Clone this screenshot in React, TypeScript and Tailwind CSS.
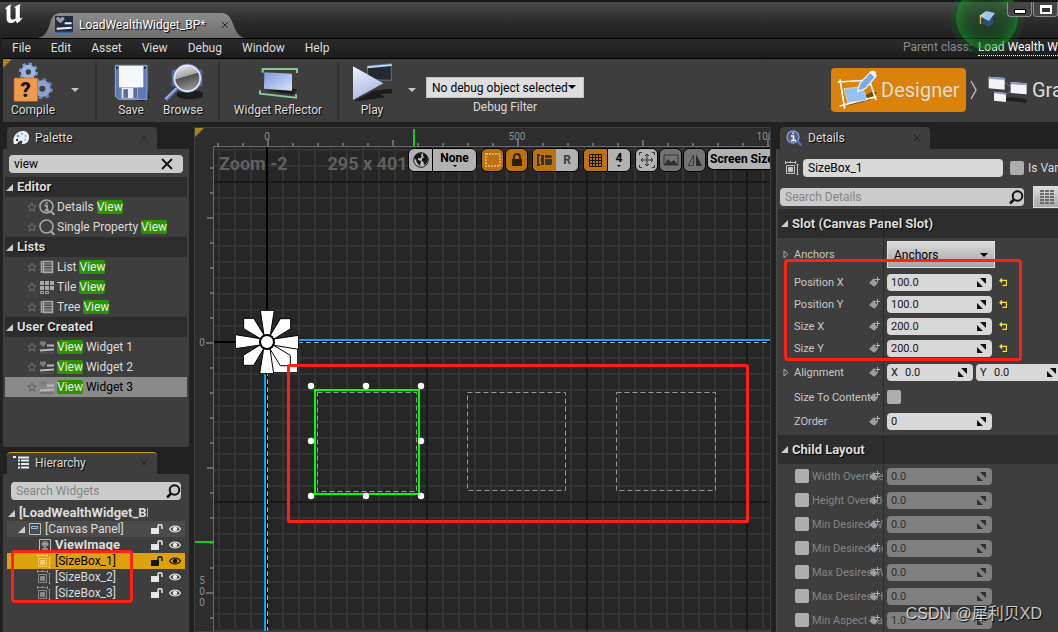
import type React from "react"

type PaletteItem = {
  before?: string
  after?: string
  icon: React.ReactNode
  selected?: boolean
}

type PaletteGroup = {
  title: string
  items: PaletteItem[]
}

type Property = {
  label: string
  value: string
}

const ListIcon = () => (
  <svg viewBox="0 0 16 16" className="h-4 w-4" fill="none" stroke="#a8a8a8">
    <path d="M2.5 2v12M4.5 2.5h9v11h-9z" strokeWidth="1.6" />
    <path d="M5 5h8M5 7.5h8M5 10h8M5 12h8" strokeWidth="1" />
  </svg>
)

const TileIcon = () => (
  <svg viewBox="0 0 16 16" className="h-4 w-4" fill="#a8a8a8">
    <path d="M1 2h4v4H1zM6 2h4v4H6zM11 2h4v4h-4zM1 7h4v4H1zM6 7h4v4H6zM11 7h4v4h-4z" />
    <path d="M1.500 12.500h3v2h-3zM6.500 12.500h3v2h-3z" fill="none" stroke="#a8a8a8" />
  </svg>
)

const LensIcon = ({ info }: { info?: boolean }) => (
  <svg viewBox="0 0 16 16" className="h-4 w-4" fill="none" stroke="#a8a8a8">
    <circle cx="7.500" cy="7.500" r="6.500" strokeWidth="1.600" />
    <path d="M12 12.500 15.500 16" strokeWidth="2" />
    {info && <path d="M5.500 6.500h2.500v5M5.500 11.500h4.500M6.500 3.800h2" strokeWidth="1.800" />}
  </svg>
)

const WidgetIcon = () => (
  <svg viewBox="0 0 16 16" className="h-4 w-4">
    <path d="M4 8 1 5V3l1.500-1L4 3l1.500-1L7 3v2z" fill="#7c7c7c" />
    <path d="M8 6.500h7M1 11.500 15 10.500" stroke="#b8b8b8" strokeWidth="2" />
    <path d="M1 14h14" stroke="#5f5f5f" strokeWidth="1" />
  </svg>
)

const groups: PaletteGroup[] = [
  {
    title: "Editor",
    items: [
      { before: "Details ", icon: <LensIcon info /> },
      { before: "Single Property ", icon: <LensIcon /> },
    ],
  },
  {
    title: "Lists",
    items: [
      { before: "List ", icon: <ListIcon /> },
      { before: "Tile ", icon: <TileIcon /> },
      { before: "Tree ", icon: <ListIcon /> },
    ],
  },
  {
    title: "User Created",
    items: [
      { after: " Widget 1", icon: <WidgetIcon /> },
      { after: " Widget 2", icon: <WidgetIcon /> },
      { after: " Widget 3", icon: <WidgetIcon />, selected: true },
    ],
  },
]

const menus = ["File", "Edit", "Asset", "View", "Debug", "Window", "Help"]

const slotProperties: Property[] = [
  { label: "Position X", value: "100.0" },
  { label: "Position Y", value: "100.0" },
  { label: "Size X", value: "200.0" },
  { label: "Size Y", value: "200.0" },
]

const childProperties: Property[] = [
  { label: "Width Override", value: "0.0" },
  { label: "Height Override", value: "0.0" },
  { label: "Min Desired Width", value: "0.0" },
  { label: "Min Desired Height", value: "0.0" },
  { label: "Max Desired Width", value: "0.0" },
  { label: "Max Desired Height", value: "0.0" },
  { label: "Min Aspect Ratio", value: "1.0" },
]

export default function App() {
  return (
    <div className="relative flex h-screen flex-col overflow-hidden bg-[#1f1f1f] font-['Roboto',sans-serif] text-xs text-[#dcdcdc]">
      <TitleBar />
      <MenuBar />
      <Toolbar />
      <div className="flex min-h-0 flex-1 gap-[5px] bg-[#212121] pt-[5px] pl-[3px]">
        <aside className="flex w-[186px] shrink-0 flex-col gap-[5px]">
          <Palette />
          <Hierarchy />
        </aside>
        <Designer />
        <Details />
      </div>
      <p className="pointer-events-none absolute right-4 bottom-1 font-['Liberation_Sans','Noto_Sans_CJK_SC',sans-serif] text-base leading-7 whitespace-nowrap text-white/75 [text-shadow:1px_1px_1px_#000]">
        CSDN @犀利贝XD
      </p>
    </div>
  )
}

function TitleBar() {
  return (
    <header className="relative flex h-[38px] shrink-0 items-end border-t-2 border-[#161616] bg-gradient-to-b from-[#4b4b4b] via-[#2d2d2d] to-[#202020]">
      <svg viewBox="0 0 60 62" className="mb-3 ml-1 h-5 w-5 shrink-0 self-center" fill="#fff">
        <path d="M1 14C8 9 14 3 22 1c-3 4-3 7-3 12v27c0 5 3 8 7 8 4 0 7-2 9-4V15c0-4-2-5-5-4C35 7 42 3 51 1c-3 5-3 8-3 13v26c0 4 2 5 5 4l5-2c-5 7-11 13-18 18-2-3-4-5-4-9-4 4-8 8-15 8C11 59 7 53 7 45V21c0-5-1-8-6-7z" />
      </svg>
      <div className="relative ml-[14px] h-[25px] w-[206px]">
        <svg viewBox="0 0 210 25" preserveAspectRatio="none" className="absolute inset-0 h-full w-full">
          <defs>
            <linearGradient id="tab" x2="0" y2="1">
              <stop stopColor="#8c8c8c" />
              <stop offset="1" stopColor="#6d6d6d" />
            </linearGradient>
          </defs>
          <path d="M0 25C8 23 10 18 13 8 15 2 18 0 24 0H186c6 0 9 2 12 9 4 10 6 14 12 16z" fill="url(#tab)" />
        </svg>
        <div className="relative flex h-full items-center gap-1.5 pr-4 pb-0.5 pl-[17px]">
          <svg viewBox="0 0 54 51" className="h-[17px] w-[18px] shrink-0">
            <path d="M0 0h54v51H0z" fill="#202c42" />
            <path d="M0 47h54v4H0z" fill="#3864a6" />
            <path d="M16 22 4 11V5l5-3 7 4 7-4 5 3v6z" fill="#9b9b9b" />
            <path d="M29 22h21M5 38l45-3" stroke="#eee" strokeWidth="6" />
          </svg>
          <span className="text-white [text-shadow:1px_1px_1px_#000]">LoadWealthWidget_BP*</span>
          <button aria-label="Close tab" className="ml-auto">
            <CloseMark />
          </button>
        </div>
      </div>
      <svg viewBox="0 0 80 80" className="pointer-events-none absolute -top-6 right-[31px] z-10 h-20 w-20">
        <defs>
          <radialGradient id="glow">
            <stop stopColor="#0c6f16" stopOpacity="0.05" />
            <stop offset="0.6" stopColor="#118a20" stopOpacity="0.2" />
            <stop offset="1" stopColor="#14a528" stopOpacity="0.5" />
          </radialGradient>
        </defs>
        <circle cx="40" cy="40" r="37" fill="#0d7a1a" opacity="0.18" />
        <circle cx="40" cy="40" r="31" fill="url(#glow)" />
        <path d="M36 41v5l6 3 4-3v-6z" fill="#2d4f74" />
        <path d="m32 38 7-5 9 2-6 8z" fill="#9cc7f2" />
        <path d="M33.500 38v8" stroke="#d8a75f" strokeWidth="1.500" />
        <path d="m40 36.500-7 1.500" stroke="#eecb92" />
      </svg>
      <div className="z-20 ml-auto flex gap-px self-start">
        <button aria-label="Minimize" className="flex h-[15px] w-[25px] items-center justify-center rounded-b-sm border border-t-0 border-[#8c8c8c] bg-[#454545]">
          <span className="mt-1 h-[5px] w-3 border border-black bg-white" />
        </button>
        <button aria-label="Maximize" className="flex h-[15px] w-[25px] items-center justify-center rounded-b-sm border border-t-0 border-[#8c8c8c] bg-[#454545]">
          <span className="h-[9px] w-3 border-2 border-t-[3px] border-white bg-[#333]" />
        </button>
      </div>
    </header>
  )
}

function MenuBar() {
  return (
    <nav className="ml-0.5 flex h-[21px] shrink-0 items-center border-y border-black bg-gradient-to-b from-[#2b2b2b] to-[#1c1c1c] pb-0.5 pl-2.5">
      <div className="flex gap-5">
        {menus.map((menu) => (
          <button key={menu}>{menu}</button>
        ))}
      </div>
      <div className="ml-auto flex w-[155px] gap-1.5 overflow-hidden whitespace-nowrap">
        <span className="text-[#8c8c8c]">Parent class:</span>
        <a href="#parent" className="border-b border-dotted border-white leading-4 text-white">
          Load Wealth W
        </a>
      </div>
    </nav>
  )
}

function ToolButton({ label, width, children }: { label: string; width: string; children: React.ReactNode }) {
  return (
    <button className={`flex shrink-0 flex-col items-center whitespace-nowrap ${width}`}>
      {children}
      <span className="leading-4 [text-shadow:1px_1px_1px_#000]">{label}</span>
    </button>
  )
}

function DropArrow({ label }: { label: string }) {
  return (
    <button aria-label={label} className="flex h-14 w-5 shrink-0 items-center justify-center">
      <svg viewBox="0 0 8 4" className="h-1 w-2">
        <path d="M0 0h8L4 4z" fill="#c4c4c4" />
      </svg>
    </button>
  )
}

function Separator() {
  return <div className="h-[58px] w-0.5 shrink-0 bg-[#303030]" />
}

function Toolbar() {
  return (
    <div className="relative ml-[3px] flex h-[63px] shrink-0 items-start bg-[#3e3e3e] pt-[3px] pl-2">
      <svg viewBox="0 0 9 9" className="absolute top-0 left-0 h-[9px] w-[9px]">
        <path d="M0 0h9L0 9z" fill="#a78322" />
      </svg>
      <ToolButton label="Compile" width="w-11">
        <svg viewBox="42 186 120 120" className="h-10 w-10">
          <circle cx="88" cy="216" r="24" fill="none" stroke="#7e98cc" strokeWidth="9" strokeDasharray="10 8.850" />
          <circle cx="88" cy="216" r="15" fill="none" stroke="#9db5e2" strokeWidth="14" />
          <circle cx="130" cy="266" r="27" fill="none" stroke="#6c83b4" strokeWidth="9" strokeDasharray="11 10.200" />
          <circle cx="130" cy="266" r="17" fill="none" stroke="#8ba2d2" strokeWidth="16" />
          <rect x="45" y="234" width="71" height="70" rx="3" fill="#f09a4c" stroke="#b96620" strokeWidth="2" />
          <text x="80" y="291" textAnchor="middle" fontSize="60" fontWeight="900" fill="#161616">
            ?
          </text>
        </svg>
      </ToolButton>
      <div className="ml-2.5">
        <DropArrow label="Compile options" />
      </div>
      <div className="ml-2.5">
        <Separator />
      </div>
      <div className="ml-2 flex">
        <ToolButton label="Save" width="w-[52px]">
          <svg viewBox="333 186 120 120" className="h-10 w-10">
            <path d="m352 290 75 14 22-11-12-33z" fill="#1f1f1f" />
            <path d="M346 196h95v102h-85l-10-10z" fill="#6078b4" stroke="#8fa8dd" strokeWidth="3" />
            <path d="M357 198h73v64h-73z" fill="#f5f7fb" />
            <path d="M365 263h48v32h-48z" fill="#e9ebf0" />
            <path d="M370 268h14v25h-14zM400 264h12v31h-12z" fill="#5d6e98" />
            <path d="M348 200h6v6h-6zM432 200h6v6h-6z" fill="#1d2540" />
          </svg>
        </ToolButton>
        <ToolButton label="Browse" width="w-[52px]">
          <svg viewBox="489 186 120 120" className="h-10 w-10">
            <defs>
              <linearGradient id="lens" x2="0.3" y2="1">
                <stop stopColor="#f2f2f2" />
                <stop offset="0.5" stopColor="#a5a5a5" />
                <stop offset="0.52" stopColor="#505050" />
                <stop offset="1" stopColor="#909090" />
              </linearGradient>
            </defs>
            <ellipse cx="570" cy="284" rx="40" ry="14" fill="#1b1b1b" />
            <path d="M515 209h92v50h-92z" fill="#52679a" />
            <path d="m530 266-33 33" stroke="#5b79ba" strokeWidth="11" />
            <path d="m530 264-34 33" stroke="#a8bee8" strokeWidth="4" />
            <circle cx="562" cy="235" r="39" fill="url(#lens)" stroke="#dfe7f7" strokeWidth="6" />
            <circle cx="562" cy="235" r="43" fill="none" stroke="#647fba" strokeWidth="2" />
          </svg>
        </ToolButton>
      </div>
      <div className="ml-[9px]">
        <Separator />
      </div>
      <div className="ml-3">
        <ToolButton label="Widget Reflector" width="w-[92px]">
          <svg viewBox="774 186 120 120" className="h-10 w-10">
            <defs>
              <linearGradient id="panel" x2="1" y2="1">
                <stop stopColor="#7f9ad8" />
                <stop offset="1" stopColor="#d5e2fb" />
              </linearGradient>
            </defs>
            <path d="m800 272 78 12 14-16-20-2z" fill="#1d1d1d" />
            <path d="m793 217 83 4v51l-84-6z" fill="url(#panel)" />
            <path d="M788 218v-11h103v12M780 271v10l108 12v-10" fill="none" stroke="#8cc596" strokeWidth="6" />
          </svg>
        </ToolButton>
      </div>
      <div className="ml-[13px]">
        <Separator />
      </div>
      <div className="ml-[13px]">
        <ToolButton label="Play" width="w-10">
          <svg viewBox="36 186 120 120" className="h-10 w-10">
            <defs>
              <linearGradient id="play" x2="0.4" y2="1">
                <stop stopColor="#eef3ff" />
                <stop offset="1" stopColor="#a9b9df" />
              </linearGradient>
            </defs>
            <path d="m43 302 60-30 54-6v14l-38 2 16 10-84 12z" fill="#1b1b1b" />
            <path d="M82 198 154 191v50l-70-2z" fill="#24282f" stroke="#5c7390" strokeWidth="3" />
            <path d="m82 199 73-7v6l-73 7z" fill="#bddbf5" />
            <path d="m39 199 91 51-91 50z" fill="url(#play)" />
          </svg>
        </ToolButton>
      </div>
      <div className="ml-2.5">
        <DropArrow label="Play options" />
      </div>
      <div className="ml-1 flex w-[158px] shrink-0 flex-col items-center pt-[15px]">
        <div className="relative w-full">
          <select id="debug-filter" className="h-[21px] w-full appearance-none border border-[#c2c2c2] bg-[#dedede] pl-[5px] text-black">
            <option>No debug object selected</option>
          </select>
          <svg viewBox="0 0 8 4" className="pointer-events-none absolute top-2 right-2 h-1 w-2">
            <path d="M0 0h8L4 4z" />
          </svg>
        </div>
        <label htmlFor="debug-filter" className="leading-[18px]">
          Debug Filter
        </label>
      </div>
      <div className="ml-auto flex items-center pt-1.5 text-xl">
        <button className="flex h-11 w-[135px] items-center gap-1 rounded-sm bg-[#da8209] pl-1.5">
          <svg viewBox="290 208 120 120" className="h-10 w-10">
            <path d="m318 316 72-18 21-23-16-2z" fill="#794805" />
            <path d="m292 244 102-6M298 316l110-28M299 236l14 88M385 232l22 66" stroke="#fff" strokeWidth="5" fill="none" />
            <path d="m311 264 55-6 14 40-58 8z" fill="#96c1ef" stroke="#dcecff" strokeWidth="2" />
            <path d="m352 272 6-23 34-36 16 12-32 38z" fill="#79abe7" stroke="#e6f2ff" strokeWidth="4" />
            <path d="m389 216 6-5c6-3 14 3 12 10l-5 8z" fill="#fff" />
          </svg>
          Designer
        </button>
        <svg viewBox="0 0 8 20" className="mx-1 h-5 w-2" fill="none" stroke="#b8b8b8" strokeWidth="1.500">
          <path d="m1 1 5 9-5 9" />
        </svg>
        <button className="flex w-[76px] items-center gap-1 pl-1.5 whitespace-nowrap">
          <svg viewBox="744 208 120 120" className="h-10 w-10 shrink-0">
            <path d="m776 298 84 8v-10l-46-7z" fill="#1e1e1e" />
            <path d="m790 242 30 22-26 20" fill="none" stroke="#708ac0" strokeWidth="2" />
            <path d="m746 228 48 4v35l-48-4zM812 244l48 4v33l-48-4zM762 273l36 4v27l-36-4z" fill="#f1f3f8" />
            <path d="m746 228 48 4v6l-48-4zM812 244l48 4v6l-48-4zM762 273l36 4v5l-36-4z" fill="#8599c5" />
          </svg>
          Gra
        </button>
      </div>
    </div>
  )
}

function CloseMark() {
  return (
    <svg viewBox="0 0 6 6" className="h-1.5 w-1.5" stroke="#262626" strokeWidth="1">
      <path d="M0 0 6 6M6 0 0 6" />
    </svg>
  )
}

function PanelTab({ title, icon, active }: { title: string; icon: React.ReactNode; active?: boolean }) {
  return (
    <div
      className={`ml-1 flex h-[22px] w-[150px] shrink-0 items-center gap-1.5 rounded-t-sm border-t bg-[#3e3e3e] pr-2.5 pb-0.5 pl-1.5 ${
        active ? "border-[#c6a30b]" : "border-[#3e3e3e]"
      }`}
    >
      {icon}
      <span className="[text-shadow:1px_1px_1px_#000]">{title}</span>
      <button aria-label={`Close ${title}`} className="ml-auto">
        <CloseMark />
      </button>
    </div>
  )
}

function Expander() {
  return (
    <svg viewBox="0 0 7 7" className="h-[7px] w-[7px] shrink-0">
      <path d="M7 0v7H0z" fill="#cdcdcd" />
    </svg>
  )
}

function SearchGlyph() {
  return (
    <svg viewBox="0 0 15 15" className="pointer-events-none absolute top-0.5 right-0 h-[15px] w-[15px]" fill="none" stroke="#111">
      <circle cx="8.500" cy="6" r="4.800" strokeWidth="2" />
      <path d="m5 9.500-4 4" strokeWidth="2.500" />
    </svg>
  )
}

function Palette() {
  return (
    <section className="flex min-h-0 flex-[320] flex-col">
      <PanelTab
        title="Palette"
        icon={
          <svg viewBox="0 0 16 14" className="h-[14px] w-4">
            <path d="M1 13C-1 8 2 1 9 0c5-.500 7 3 7 6 0 5-3 7-6 7-2 0-2-2-3-3-2 0-2 3-4 3z" fill="#f2f5f9" />
            <circle cx="5" cy="5" r="1.500" fill="#5ba0dc" />
            <circle cx="9" cy="2.800" r="1.400" fill="#8fc5ee" />
            <circle cx="12.500" cy="5" r="1.500" fill="#a9d3f2" />
            <circle cx="12" cy="9" r="1.500" fill="#a9d3f2" />
            <circle cx="8" cy="11" r="1.500" fill="#3e3e3e" />
            <circle cx="4" cy="9" r="1.200" fill="#3e3e3e" />
          </svg>
        }
      />
      <div className="flex-1 overflow-hidden bg-[#3e3e3e] px-0.5 pt-1.5">
        <div className="relative mx-1 mb-1">
          <input aria-label="Search palette" defaultValue="view" className="block h-[18px] w-full rounded-sm bg-[#cbcbcb] px-[5px] text-black" />
          <button aria-label="Clear search" className="absolute top-[3px] right-2.5">
            <svg viewBox="0 0 12 12" className="h-3 w-3" stroke="#111" strokeWidth="1.800">
              <path d="m1 1 10 10M11 1 1 11" />
            </svg>
          </button>
        </div>
        {groups.map((group) => (
          <div key={group.title}>
            <h3 className="flex h-5 items-center gap-1 bg-[#2d2d2d] pl-px text-[13px] font-bold [text-shadow:1px_1px_1px_#000]">
              <Expander />
              {group.title}
            </h3>
            {group.items.map((item) => (
              <PaletteRow key={`${item.before}${item.after}`} item={item} />
            ))}
          </div>
        ))}
      </div>
    </section>
  )
}

function PaletteRow({ item }: { item: PaletteItem }) {
  return (
    <div className={`flex h-5 items-center pl-[22px] whitespace-pre ${item.selected ? "bg-[#8a8a8a] text-black" : ""}`}>
      <svg viewBox="0 0 10 10" className="mr-0.5 h-2.5 w-2.5 shrink-0" fill="none" stroke={item.selected ? "#606060" : "#707070"}>
        <path d="m5 1 1.200 2.800 3 .2-2.300 2 .7 3L5 7.400 2.400 9l.7-3L.8 4l3-.2z" />
      </svg>
      <span className="mr-0.5 shrink-0">{item.icon}</span>
      <span>
        {item.before}
        <mark className="rounded-xs bg-[#2a9400] text-[#eee]">View</mark>
        {item.after}
      </span>
    </div>
  )
}

function SizeBoxIcon({ color = "#8a8a8a" }: { color?: string }) {
  return (
    <svg viewBox="0 0 14 14" className="h-3.5 w-3.5 shrink-0" fill="none" stroke={color}>
      <path d="M1.500 4.500h8v8h-8z" />
      <path d="M3.500 6.500h4v4h-4z" fill={color} />
      <path d="M.5 1.500h10M.5 0v3M10.500 0v3M5.500 0v2M12.500 3.500v10M11.500 3.500h2M11.500 13.500h2" />
    </svg>
  )
}

function RowToggles({ dark }: { dark?: boolean }) {
  const color = dark ? "#141414" : "#e6e6e6"
  return (
    <span className="ml-auto flex items-center gap-1.5">
      <button aria-label="Lock">
        <svg viewBox="0 0 12 10" className="h-2.5 w-3">
          <path d="M0 4h8v6H0z" fill={color} />
          <path d="M7 5V2.500C7 0 11 0 11 2.500V5" fill="none" stroke={color} strokeWidth="1.500" />
        </svg>
      </button>
      <button aria-label="Visibility">
        <svg viewBox="0 0 12 8" className="h-2 w-3">
          <path d="M.5 4C3 0 9 0 11.500 4 9 8 3 8 .5 4z" fill="none" stroke={color} strokeWidth="1.200" />
          <circle cx="6" cy="4" r="2.300" fill={color} />
        </svg>
      </button>
    </span>
  )
}

function Hierarchy() {
  return (
    <section className="flex min-h-0 flex-[180] flex-col">
      <PanelTab
        active
        title="Hierarchy"
        icon={
          <svg viewBox="0 0 16 13" className="h-[13px] w-4">
            <path d="M0 1h3M5 1.500h11M5 4.500h2M8 4.500h8M5 8h2M8 8h8M5 11.500h2M8 11.500h8" stroke="#e2f3fa" strokeWidth="2" />
          </svg>
        }
      />
      <div className="flex-1 overflow-hidden bg-[#3e3e3e] px-1 pt-2">
        <div className="relative mx-1 mb-[5px]">
          <input aria-label="Search widgets" placeholder="Search Widgets" className="block h-[18px] w-full rounded-sm bg-[#cbcbcb] px-[5px] placeholder:text-[#858585]" />
          <SearchGlyph />
        </div>
        <div className="relative">
          <div className="flex h-4 w-[141px] items-center gap-1 overflow-hidden pl-px text-[13px] font-bold whitespace-nowrap">
            <Expander />
            [LoadWealthWidget_BP]
          </div>
          <div className="flex h-4 items-center gap-1 bg-[#4b4b4b] pr-1 pl-[11px]">
            <Expander />
            <svg viewBox="0 0 12 12" className="h-3 w-3 shrink-0" fill="none" stroke="#bdbdbd">
              <path d="M.5.500h11v11H.5z" />
              <path d="M2.500 3.500h6v2h-6z" stroke="#90b6db" />
            </svg>
            [Canvas Panel]
            <RowToggles />
          </div>
          <div className="flex h-4 items-center gap-1 pr-1 pl-8 text-[13px] font-bold">
            <svg viewBox="0 0 12 12" className="h-3 w-3 shrink-0" fill="none" stroke="#bdbdbd">
              <path d="M.5.500h11v11H.5zM6 7v3M3 10h6" />
              <path d="M3 5c0-3 6-3 6 0S3 8 3 5zM4 4l4 2M8 4 4 6" />
            </svg>
            ViewImage
            <RowToggles />
          </div>
          {["[SizeBox_1]", "[SizeBox_2]", "[SizeBox_3]"].map((name, i) => (
            <div key={name} className={`flex h-4 items-center gap-1 pr-1 pl-[30px] ${i === 0 ? "bg-[#dca20c] text-black" : ""}`}>
              <SizeBoxIcon color={i === 0 ? "#f4ca62" : "#8a8a8a"} />
              {name}
              <RowToggles dark={i === 0} />
            </div>
          ))}
          <div className="pointer-events-none absolute top-[45px] left-1 h-[53px] w-[122px] rounded-sm border-[3px] border-[#ff2113]" />
        </div>
      </div>
    </section>
  )
}

const rulerTicks = Array.from({ length: 60 }, (_, i) => i - 8)
const handles = [
  [311, 386],
  [366, 386],
  [421, 386],
  [311, 441],
  [421, 441],
  [311, 496],
  [366, 496],
  [421, 496],
]

function Designer() {
  return (
    <main className="relative min-w-0 flex-1 overflow-hidden border border-[#3e3e3e] bg-[#262626]">
      <svg className="absolute inset-0 h-full w-full">
        <defs>
          <pattern id="minor" width="16" height="16" patternUnits="userSpaceOnUse" x="218" y="149">
            <path d="M1 0v16M0 1h16" stroke="#343434" strokeWidth="2" />
          </pattern>
          <pattern id="major" width="160" height="160" patternUnits="userSpaceOnUse" x="266" y="181">
            <path d="M1 0v160M0 1h160" stroke="#191919" strokeWidth="2" />
          </pattern>
        </defs>
        <g transform="translate(-195 -128)">
          <rect x="214" y="147" width="2000" height="1500" fill="url(#minor)" />
          <rect x="214" y="147" width="2000" height="1500" fill="url(#major)" />
          <path d="M267 147v1500M214 342h2000" stroke="#000" strokeWidth="2" />

          {/* canvas outline */}
          <path d="M265 1600V340h2000" fill="none" stroke="#00aaff" strokeWidth="2" />
          <path d="M267.500 1600V342.500h2000" fill="none" stroke="#aaa" strokeDasharray="5 3" />

          {/* rulers */}
          <path d="M195 128h2000v18H213v1500h-18z" fill="#2d2d2d" />
          <path d="M213.500 1600V146.500h2000" fill="none" stroke="#6a6a6a" />
          {rulerTicks.map((i) => {
            const size = i % 10 === 0 ? 7 : i % 5 === 0 ? 6 : 3
            return (
              <g key={i} fill="#6a6a6a">
                {i >= -2 && <rect x={267 + i * 25} y={146 - size} width="2" height={size} />}
                {i >= -7 && <rect x={213 - size} y={342 + i * 25} width={size} height="2" />}
              </g>
            )
          })}
          <g fill="#8d8d8d" fontSize="10" textAnchor="middle">
            <text x="267" y="140">0</text>
            <text x="517" y="140">500</text>
            <text x="765" y="140">100</text>
            <text x="202" y="346">0</text>
            <text x="202" y="584">5</text>
            <text x="202" y="595">0</text>
            <text x="202" y="606">0</text>
          </g>
          <path d="M414 129v18M195 542h19" stroke="#15cf15" strokeWidth="2" />
          <path d="M195 128h9l-9 9z" fill="#a78322" />

          {/* anchor medallion */}
          <g transform="translate(190 290) scale(0.3333)" fill="#fff" stroke="#000" strokeWidth="3">
            <path d="M231 156h90v90h-90z" stroke="none" />
            {[0, 90, 180, 270].map((angle) => (
              <g key={angle} transform={`rotate(${angle} 231 156)`}>
                <path d="m211 61h42l-12 75h-19z" />
                <path d="M271 86h31v30l-50 31-11-11z" />
              </g>
            ))}
            <circle cx="231" cy="156" r="21" strokeWidth="6" />
          </g>

          {/* size boxes */}
          <path d="M317.500 392.500h99v99h-99zM467.500 392.500h98v98h-98zM616.500 392.500h99v98h-99z" fill="none" stroke="#999" strokeDasharray="5 3" />
          <rect x="315" y="390" width="104" height="104" fill="none" stroke="#0f0" strokeWidth="2" />
          {handles.map(([x, y]) => (
            <circle key={`${x}-${y}`} cx={x} cy={y} r="3.200" fill="#fff" />
          ))}
          <rect x="288.500" y="365.500" width="459" height="156" rx="1" fill="none" stroke="#ff2113" strokeWidth="3" />
        </g>
      </svg>
      <div className="absolute top-6 left-6 flex gap-10 text-lg leading-6 font-bold whitespace-nowrap text-[#606060]">
        <span>Zoom -2</span>
        <span>295 x 401</span>
      </div>
      <div className="absolute top-5 right-0 left-[213px] flex items-start gap-1 overflow-hidden font-bold whitespace-nowrap text-black">
        <div className="flex h-6 shrink-0 overflow-hidden rounded-md border border-black bg-[#b2b2b2]">
          <button aria-label="Localization" className="flex w-6 items-center justify-center border-r border-black">
            <svg viewBox="0 0 16 16" className="h-4 w-4">
              <circle cx="8" cy="8" r="7.300" fill="#c4c4c4" stroke="#161616" />
              <path d="M1 6 3 2.500 6 1l3 .5-1 2 1 1-2 2-2-.5 0 2 3 1-1 5-3-3-1-3-1-1zM10 1l4 2.500L15 8l-2 4-2 1-.5-3-2-1 1-3 1.500-.500-1-2z" fill="#161616" />
            </svg>
          </button>
          <button className="relative w-[43px] pb-1">
            None
            <SmallArrow />
          </button>
        </div>
        <div className="flex shrink-0 gap-px">
          <OverlayButton label="Outline" tone="bg-[#bd720a]">
            <path d="M1 2h14v12H1z" fill="none" stroke="#d7c4a2" strokeWidth="1.400" strokeDasharray="2 1" />
          </OverlayButton>
          <OverlayButton label="Respect locks" tone="bg-[#bd720a]">
            <path d="M3 7h10v7H3z" fill="#2c1d07" />
            <path d="M5 8V5c0-4 6-4 6 0v3" fill="none" stroke="#2c1d07" strokeWidth="1.800" />
          </OverlayButton>
        </div>
        <div className="flex h-6 shrink-0 overflow-hidden rounded-md border border-black bg-[#b2b2b2]">
          <button aria-label="Layout transform" className="flex w-[23px] items-center justify-center bg-[#bd720a]">
            <svg viewBox="0 0 16 14" className="h-3.5 w-4" fill="#333">
              <path d="M0 1h3v2H2v8h1v2H0zM4 2h3v10H4zM8 2h6l1 1v1l-1 1H8zM8 6h7v5l-1 1H9l-1-1z" />
            </svg>
          </button>
          <button className="w-[22px] text-[#3c3c3c]">R</button>
        </div>
        <div className="flex h-6 shrink-0 overflow-hidden rounded-md border border-black bg-[#b2b2b2]">
          <button aria-label="Grid snap" className="flex w-6 items-center justify-center border-r border-black bg-[#bd720a]">
            <svg viewBox="0 0 13 13" className="h-[13px] w-[13px]" stroke="#111" fill="none">
              <path d="M.5.500h12v12H.5zM3.500 0v13M6.500 0v13M9.500 0v13M0 3.500h13M0 6.500h13M0 9.500h13" />
            </svg>
          </button>
          <button className="relative w-[22px] pb-1">
            4
            <SmallArrow />
          </button>
        </div>
        <div className="flex shrink-0 gap-px">
          <OverlayButton label="Zoom to fit" tone="bg-[#b2b2b2]">
            <path d="M.5 3V.5H3M13 .5h2.500V3M.5 13v2.500H3M13 15.500h2.500V13M8 2v12M2 8h12M6 4l2-2 2 2M6 12l2 2 2-2M4 6 2 8l2 2M12 6l2 2-2 2" fill="none" stroke="#303030" />
          </OverlayButton>
          <OverlayButton label="Background image" tone="bg-[#737373]">
            <path d="M1 3h14v10H1z" fill="none" stroke="#343434" />
            <path d="m1 13 4-6 3 3 3-2 4 5z" fill="#303030" />
          </OverlayButton>
          <OverlayButton label="Flip" tone="bg-[#737373]">
            <path d="M9 2v12h6z" fill="#292929" />
            <path d="M6.500 3v10.500h-5z" fill="none" stroke="#343434" />
          </OverlayButton>
          <button className="h-[22px] shrink-0 rounded-l-md border border-r-0 border-black bg-[#b2b2b2] pl-0.5">Screen Size</button>
        </div>
      </div>
    </main>
  )
}

function SmallArrow() {
  return (
    <svg viewBox="0 0 4 2" className="absolute inset-x-0 bottom-1 mx-auto h-0.5 w-1">
      <path d="M0 0h4L2 2z" />
    </svg>
  )
}

function OverlayButton({ label, tone, children }: { label: string; tone: string; children: React.ReactNode }) {
  return (
    <button aria-label={label} className={`flex h-6 w-[23px] shrink-0 items-center justify-center rounded-md border border-black ${tone}`}>
      <svg viewBox="0 0 16 16" className="h-4 w-4">
        {children}
      </svg>
    </button>
  )
}

function BindIcon() {
  return (
    <svg viewBox="0 0 11 11" className="absolute right-[3px] h-[11px] w-[11px]">
      <path d="M6 1v6l-1 4L1 7z" fill="#151515" />
      <path d="m5 1 4 5-4 4-5-4z" fill="#9c9c9c" />
      <path d="M8.500 0v5M6 2.500h5" stroke="#3e3e3e" strokeWidth="3" />
      <path d="M8.500 0v5M6 2.500h5" stroke="#b0b0b0" />
    </svg>
  )
}

function NumberBox({ id, value, prefix, disabled }: { id: string; value: string; prefix?: string; disabled?: boolean }) {
  return (
    <div
      className={`relative flex h-[17px] shrink-0 items-center rounded-sm px-1 pt-px text-[11px] leading-4 ${prefix ? "w-[86px]" : "w-[105px]"} ${
        disabled ? "bg-[#808080] text-[#303030]" : "bg-[#d8d8d8] text-[#161616]"
      }`}
    >
      {prefix && (
        <label htmlFor={id} className="w-3.5 shrink-0">
          {prefix}
        </label>
      )}
      <input id={id} defaultValue={value} disabled={disabled} className="w-full min-w-0" />
      <svg viewBox="0 0 9 9" className="absolute top-1 right-1.5 h-[9px] w-[9px]" fill={disabled ? "#303030" : "#111"}>
        <path d="M3 0h6v6zM0 3v6h6z" />
      </svg>
    </div>
  )
}

function PropertyRow({ label, htmlFor, height, expandable, override, children }: {
  label: string
  htmlFor: string
  height: string
  expandable?: boolean
  override?: boolean
  children: React.ReactNode
}) {
  return (
    <div className={`grid grid-cols-[107px_1fr] ${height}`}>
      <div className="relative flex items-center overflow-hidden pl-[18px] text-[11px] leading-4 whitespace-nowrap">
        {expandable && (
          <svg viewBox="0 0 6 9" className="absolute left-[7px] h-[9px] w-1.5" fill="none" stroke="#a8a8a8">
            <path d="M1 1v7l4-3.500z" />
          </svg>
        )}
        {override && (
          <input type="checkbox" aria-label={`Enable ${label}`} className="mr-[3px] ml-px h-3.5 w-3.5 shrink-0 appearance-none rounded-xs bg-[#adadad]" />
        )}
        <label htmlFor={htmlFor} className={`pt-px ${override ? "text-[#858585]" : "text-[#c8c8c8]"}`}>
          {label}
        </label>
        {htmlFor !== "anchors" && <BindIcon />}
      </div>
      <div className="flex items-center gap-[3px] border-l border-[#2a2a2a] pl-[3px]">{children}</div>
    </div>
  )
}

function Category({ title }: { title: string }) {
  return (
    <h3 className="ml-0.5 grid h-[29px] grid-cols-[105px_1fr] bg-[#2d2d2d] text-[13px] font-bold">
      <span className="flex items-center gap-1 pl-[3px] whitespace-nowrap [text-shadow:1px_1px_1px_#000]">
        <Expander />
        {title}
      </span>
      <span className="border-l border-[#232323]" />
    </h3>
  )
}

function Details() {
  return (
    <aside className="flex w-[282px] shrink-0 flex-col overflow-hidden">
      <PanelTab
        title="Details"
        icon={
          <svg viewBox="0 0 16 16" className="h-4 w-4">
            <circle cx="7" cy="7" r="6" fill="#536079" stroke="#7d9ad2" strokeWidth="1.500" />
            <path d="m11.500 11.500 4 4" stroke="#4971c4" strokeWidth="2.500" />
            <path d="M5 6h2.500v4.500M5 10.500h5M6.300 3.300h1.500" fill="none" stroke="#fff" strokeWidth="1.600" />
          </svg>
        }
      />
      <div className="flex-1 overflow-hidden border-l border-[#4b4b4b] bg-[#3e3e3e]">
        <div className="-ml-px">
          <div className="flex h-9 items-center pt-0.5 pl-[9px] whitespace-nowrap">
            <SizeBoxIcon color="#c8c8c8" />
            <input aria-label="Widget name" defaultValue="SizeBox_1" className="ml-1 h-[18px] w-[200px] shrink-0 rounded-sm bg-[#d8d8d8] px-[5px] text-black" />
            <input id="is-variable" type="checkbox" className="ml-[7px] h-3.5 w-3.5 shrink-0 appearance-none rounded-xs bg-[#adadad]" />
            <label htmlFor="is-variable" className="ml-1">
              Is Var
            </label>
          </div>
          <div className="flex h-6 items-center pl-1">
            <div className="relative w-[244px] shrink-0">
              <input aria-label="Search details" placeholder="Search Details" className="block h-[18px] w-full rounded-sm bg-[#cbcbcb] px-[5px] placeholder:text-[#858585]" />
              <SearchGlyph />
            </div>
            <button aria-label="Property matrix" className="ml-[9px] h-[22px] w-8 shrink-0 border border-[#dedede] bg-gradient-to-b from-[#dcdcdc] to-[#a8a8a8] pl-1.5">
              <svg viewBox="0 0 14 14" className="h-3.5 w-3.5" stroke="#696969" strokeWidth="2" strokeDasharray="4 1">
                <path d="M0 1h14M0 4h14M0 7h14M0 10h14M0 13h14" />
              </svg>
            </button>
          </div>
          <Category title="Slot (Canvas Panel Slot)" />
          <div className="relative pb-0.5">
            <PropertyRow label="Anchors" htmlFor="anchors" height="h-[33px]" expandable>
              <button id="anchors" className="flex h-[27px] w-[108px] items-center justify-between border border-[#e0e0e0] bg-gradient-to-b from-[#dadada] to-[#a5a5a5] px-1.5 text-black">
                Anchors
                <svg viewBox="0 0 8 4" className="h-1 w-2">
                  <path d="M0 0h8L4 4z" />
                </svg>
              </button>
            </PropertyRow>
            {slotProperties.map(({ label, value }) => (
              <PropertyRow key={label} label={label} htmlFor={label} height="h-[22px]">
                <NumberBox id={label} value={value} />
                <button aria-label={`Reset ${label}`} className="ml-1">
                  <svg viewBox="0 0 9 9" className="h-[9px] w-[9px]" fill="none">
                    <path d="M3 3.500h6v5H4" stroke="#111" />
                    <path d="M1 2.500h6.500v5H3.500M3 .5l-2 2 2 2" stroke="#ece63a" strokeWidth="1.300" />
                  </svg>
                </button>
              </PropertyRow>
            ))}
            <PropertyRow label="Alignment" htmlFor="align-x" height="h-[26px]" expandable>
              <NumberBox id="align-x" prefix="X" value="0.0" />
              <NumberBox id="align-y" prefix="Y" value="0.0" />
            </PropertyRow>
            <PropertyRow label="Size To Content" htmlFor="size-to-content" height="h-6">
              <input id="size-to-content" type="checkbox" className="h-3.5 w-3.5 appearance-none rounded-xs bg-[#adadad]" />
            </PropertyRow>
            <PropertyRow label="ZOrder" htmlFor="zorder" height="h-6">
              <NumberBox id="zorder" value="0" />
            </PropertyRow>
            <div className="pointer-events-none absolute top-[21px] left-2 h-[102px] w-[238px] rounded-sm border-[3px] border-[#ff2113]" />
          </div>
          <Category title="Child Layout" />
          {childProperties.map(({ label, value }) => (
            <PropertyRow key={label} label={label} htmlFor={label} height="h-6" override>
              <NumberBox id={label} value={value} disabled />
            </PropertyRow>
          ))}
        </div>
      </div>
    </aside>
  )
}
